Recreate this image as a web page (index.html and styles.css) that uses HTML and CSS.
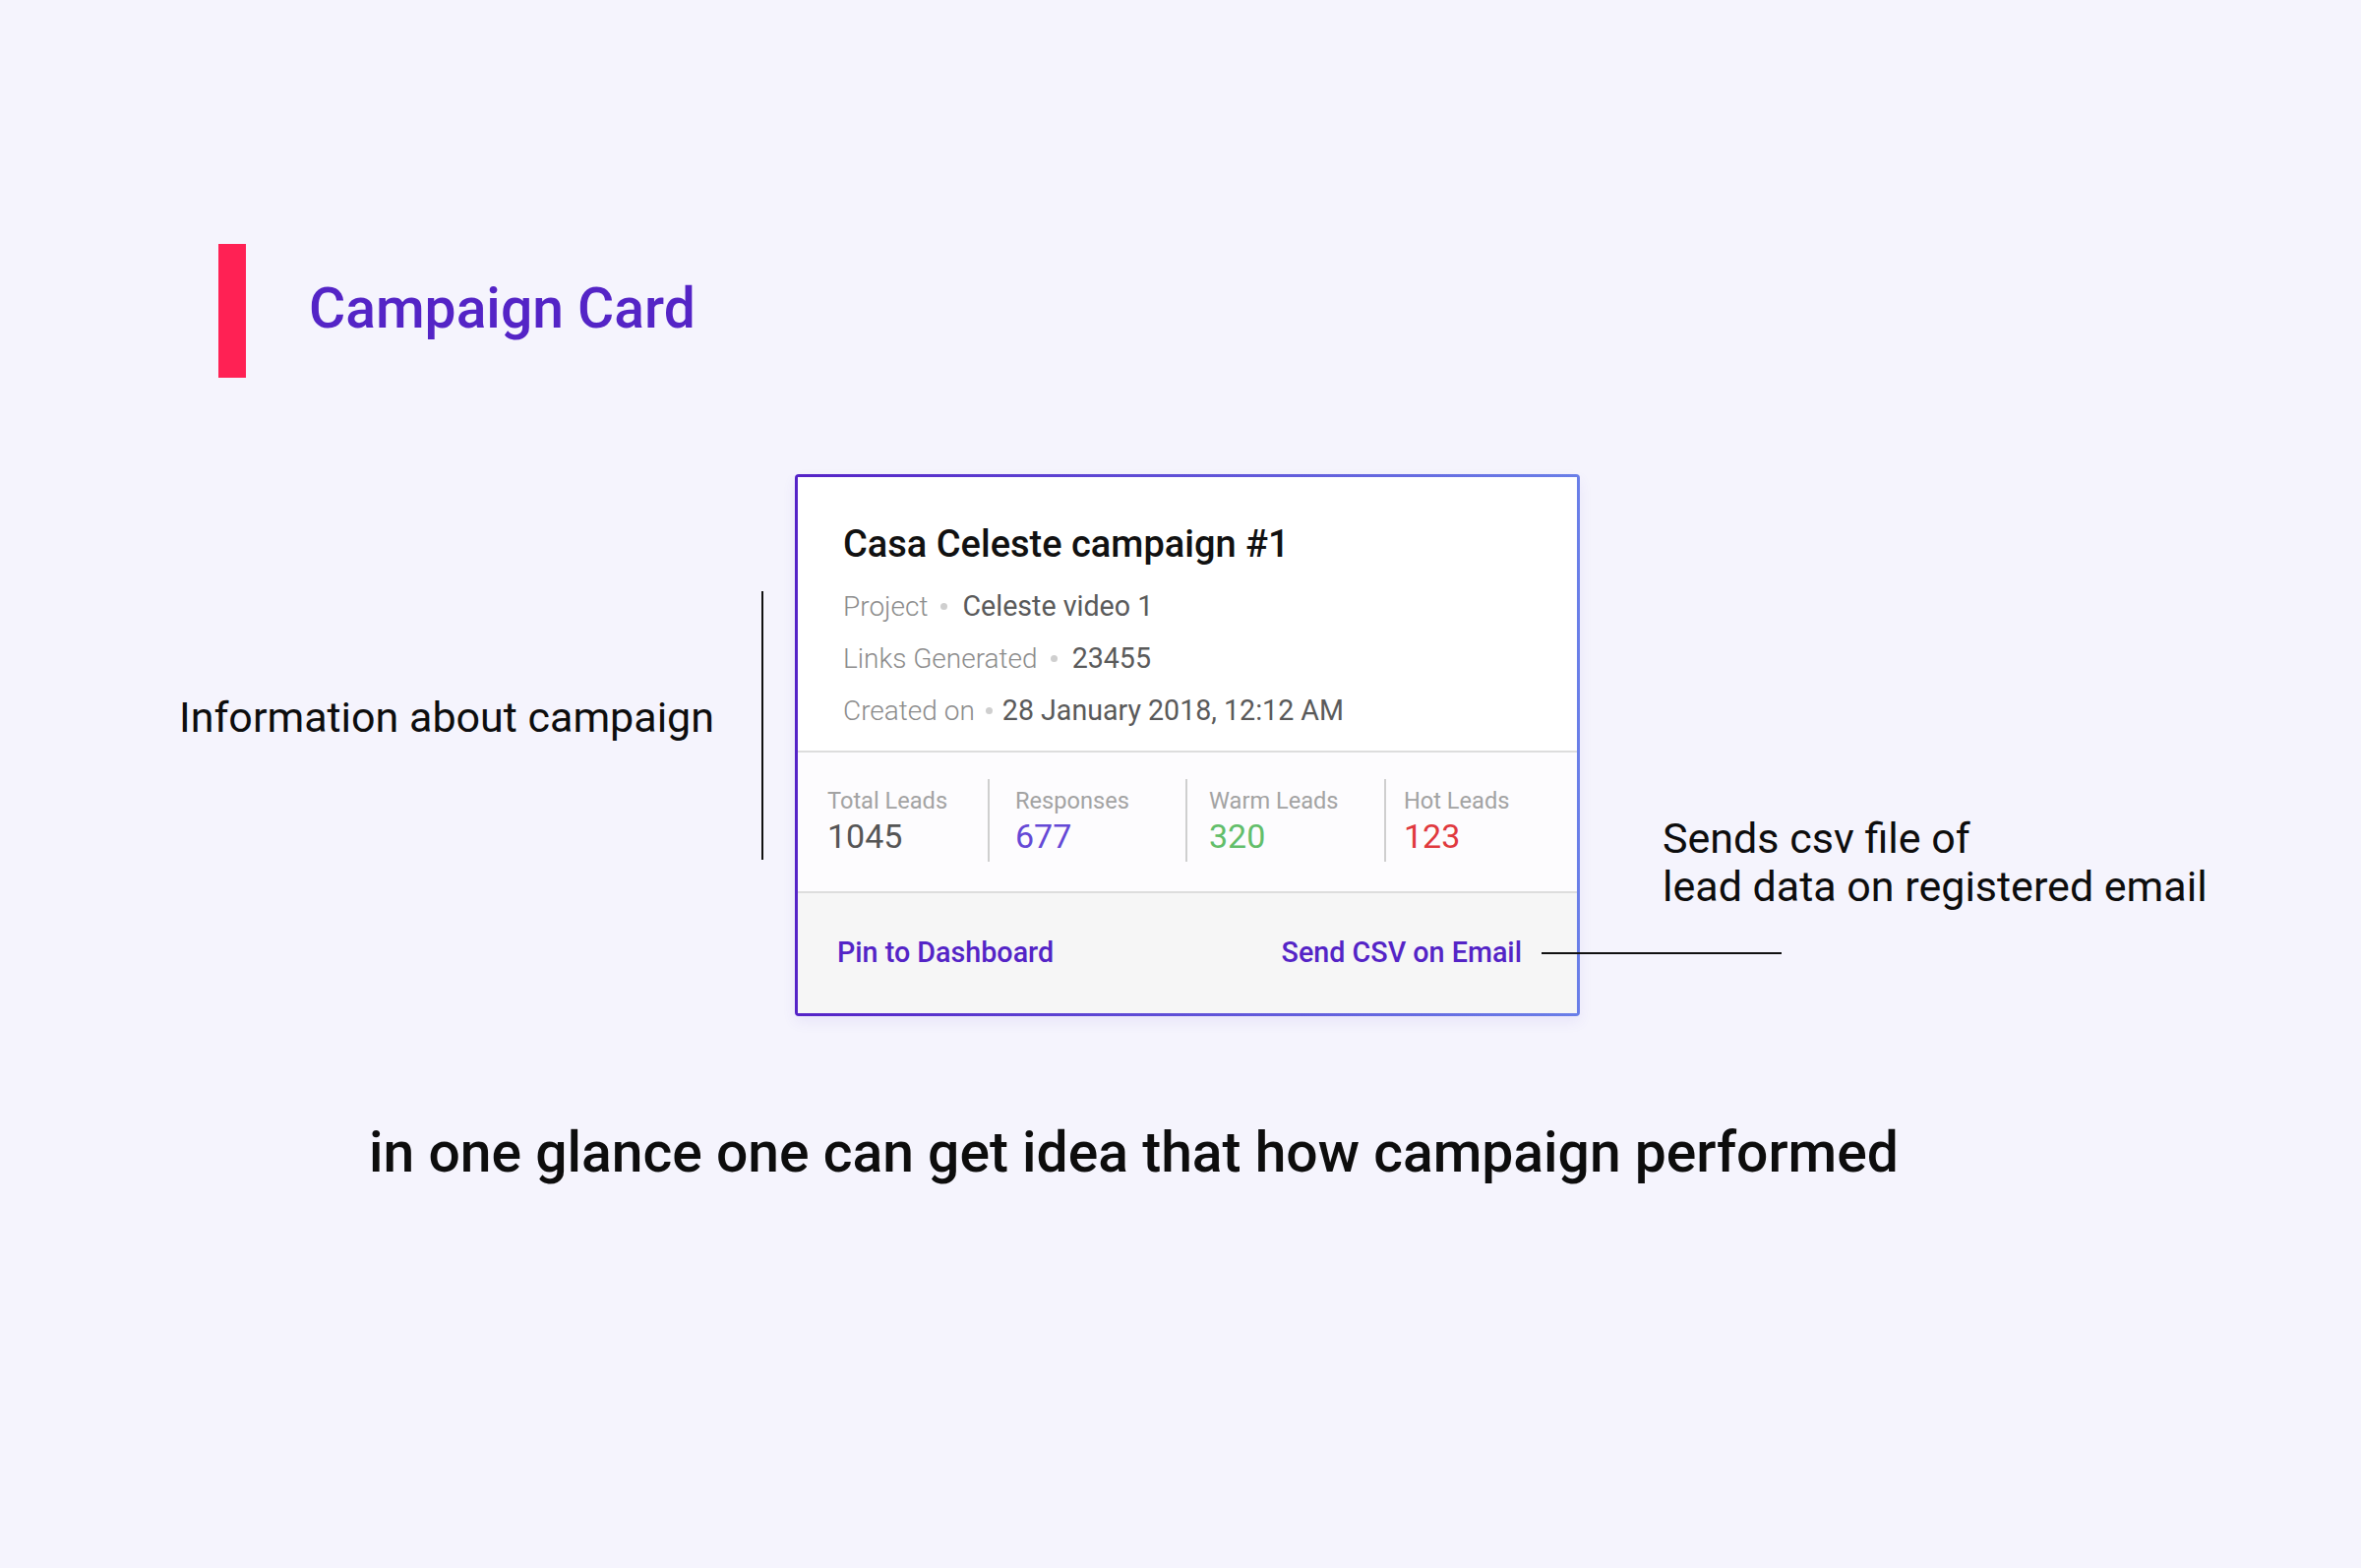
FILE: index.html
```html
<!DOCTYPE html>
<html lang="en">
<head>
<meta charset="utf-8">
<title>Campaign Card</title>
<link rel="stylesheet" href="styles.css">
</head>
<body>
<main class="page">
  <header class="heading">
    <span class="heading-bar"></span>
    <h1 class="heading-title">Campaign Card</h1>
  </header>

  <section class="showcase">
    <div class="note-left">
      <p class="note-text note-text--left">Information about campaign</p>
      <span class="note-vline"></span>
    </div>

    <article class="card">
      <div class="card-info">
        <h2 class="card-title">Casa Celeste campaign #1</h2>
        <ul class="meta">
          <li class="meta-row"><span class="meta-label">Project</span><span class="meta-dot"></span><span class="meta-value">Celeste video 1</span></li>
          <li class="meta-row"><span class="meta-label">Links Generated</span><span class="meta-dot"></span><span class="meta-value">23455</span></li>
          <li class="meta-row meta-row--tight"><span class="meta-label">Created on</span><span class="meta-dot"></span><span class="meta-value">28 January 2018, 12:12 AM</span></li>
        </ul>
      </div>
      <div class="card-stats">
        <div class="stat">
          <span class="stat-label">Total Leads</span>
          <span class="stat-value stat-value--total">1045</span>
        </div>
        <div class="stat">
          <span class="stat-label">Responses</span>
          <span class="stat-value stat-value--responses">677</span>
        </div>
        <div class="stat">
          <span class="stat-label">Warm Leads</span>
          <span class="stat-value stat-value--warm">320</span>
        </div>
        <div class="stat">
          <span class="stat-label">Hot Leads</span>
          <span class="stat-value stat-value--hot">123</span>
        </div>
      </div>
      <div class="card-actions">
        <a class="action" href="#">Pin to Dashboard</a>
        <a class="action action--send" href="#">Send CSV on Email</a>
      </div>
    </article>

    <div class="note-right">
      <p class="note-text">Sends csv file of<br>lead data on registered email</p>
    </div>
  </section>

  <p class="caption">in one glance one can get idea that how campaign performed</p>
</main>
</body>
</html>
```

FILE: styles.css
```css
* { box-sizing: border-box; }

html, body {
  margin: 0;
  padding: 0;
}

body {
  background: #f5f4fd;
  font-family: Roboto, "Noto Sans", "Liberation Sans", sans-serif;
  color: #111;
  width: 2400px;
  height: 1594px;
  overflow: hidden;
}

.page {
  padding-top: 248px;
}

/* Heading */
.heading {
  display: flex;
  align-items: center;
  padding-left: 222px;
}

.heading-bar {
  display: block;
  width: 28px;
  height: 136px;
  background: #ff2154;
}

.heading-title {
  margin: 0 0 4px 64px;
  font-size: 57px;
  font-weight: 500;
  line-height: 70px;
  color: #5424c6;
}

/* Showcase */
.showcase {
  display: grid;
  grid-template-columns: 808px 798px 1fr;
  margin-top: 98px;
}

.note-left {
  display: flex;
  align-items: center;
  justify-content: flex-end;
  align-self: start;
  padding-top: 119px;
  padding-right: 32px;
}

.note-text {
  margin: 0;
  font-size: 43px;
  line-height: 49px;
  font-weight: 400;
  color: #0d0d0d;
}

.note-text--left {
  margin-right: 48px;
  margin-bottom: 16px;
}

.note-vline {
  display: block;
  width: 2px;
  height: 273px;
  background: #111;
}

.note-right {
  padding-left: 84px;
  padding-top: 346px;
}

/* Card */
.card {
  width: 798px;
  height: 551px;
  border: 3px solid transparent;
  border-radius: 4px;
  background:
    linear-gradient(#fff, #fff) padding-box,
    linear-gradient(90deg, #5523c7 0%, #6a7fe8 100%) border-box;
  box-shadow: 0 6px 14px rgba(90, 70, 200, 0.08);
  display: flex;
  flex-direction: column;
}

.card-info {
  padding: 46px 40px 14px 46px;
  background: #fff;
  border-bottom: 2px solid #dddddd;
}

.card-title {
  margin: 0;
  font-size: 38px;
  line-height: 44px;
  font-weight: 500;
  color: #111;
}

.meta {
  list-style: none;
  margin: 15px 0 0;
  padding: 0;
}

.meta-row {
  display: flex;
  align-items: center;
  height: 53px;
  font-size: 28px;
  line-height: 53px;
}

.meta-label {
  font-weight: 300;
  color: #8c8c8c;
}

.meta-dot {
  width: 7px;
  height: 7px;
  border-radius: 50%;
  background: #cfcfcf;
  margin: 0 15px 0 13px;
}

.meta-row--tight .meta-dot {
  margin: 0 10px 0 11px;
}

.meta-value {
  font-size: 28.6px;
  font-weight: 400;
  color: #5a5a5a;
}

/* Stats */
.card-stats {
  display: grid;
  grid-template-columns: 193px 201px 202px 1fr;
  padding: 27px 0 30px;
  background: #fdfcfe;
  border-bottom: 2px solid #dddddd;
}

.stat {
  display: flex;
  flex-direction: column;
  height: 84px;
  padding-top: 8px;
  border-left: 2px solid #cfcfcf;
}

.stat:nth-child(1) { border-left: 0; padding-left: 30px; }
.stat:nth-child(2) { padding-left: 26px; }
.stat:nth-child(3) { padding-left: 22px; }
.stat:nth-child(4) { padding-left: 18px; }

.stat-label {
  font-size: 23.6px;
  line-height: 28px;
  color: #a3a3a3;
}

.stat-value {
  margin-top: 2px;
  font-size: 34px;
  line-height: 40px;
}

.stat-value--total { color: #555; }
.stat-value--responses { color: #6549d6; }
.stat-value--warm { color: #62be6a; }
.stat-value--hot { color: #e0393e; }

/* Actions */
.card-actions {
  flex: 1;
  display: flex;
  align-items: center;
  justify-content: space-between;
  padding: 0 56px 2px 40px;
  background: #f6f6f6;
}

.action {
  position: relative;
  font-size: 28.7px;
  font-weight: 500;
  color: #5424c6;
  text-decoration: none;
}

.action--send::after {
  content: "";
  position: absolute;
  left: calc(100% + 20px);
  top: 50%;
  width: 244px;
  height: 2px;
  background: #111;
}

/* Caption */
.caption {
  margin: 104px 0 0;
  padding-left: 375px;
  font-size: 57px;
  line-height: 70px;
  font-weight: 500;
  color: #0d0d0d;
}
```
